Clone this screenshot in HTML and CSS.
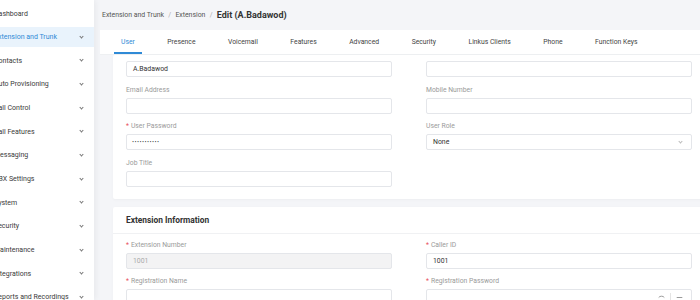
FILE: index.html
```html
<!DOCTYPE html>
<html lang="en">
<head>
  <meta charset="UTF-8" />
  <title>Edit Extension</title>
  <link rel="stylesheet" href="styles.css">
</head>
<body>
  <div class="app">
    <!-- Sidebar -->
    <nav class="sidebar">
      <div class="nav-item"><span>Dashboard</span></div>
      <div class="nav-item active"><span>Extension and Trunk</span><i class="chev"></i></div>
      <div class="nav-item"><span>Contacts</span><i class="chev"></i></div>
      <div class="nav-item"><span>Auto Provisioning</span><i class="chev"></i></div>
      <div class="nav-item"><span>Call Control</span><i class="chev"></i></div>
      <div class="nav-item"><span>Call Features</span><i class="chev"></i></div>
      <div class="nav-item"><span>Messaging</span><i class="chev"></i></div>
      <div class="nav-item"><span>PBX Settings</span><i class="chev"></i></div>
      <div class="nav-item"><span>System</span><i class="chev"></i></div>
      <div class="nav-item"><span>Security</span><i class="chev"></i></div>
      <div class="nav-item"><span>Maintenance</span><i class="chev"></i></div>
      <div class="nav-item"><span>Integrations</span><i class="chev"></i></div>
      <div class="nav-item"><span>Reports and Recordings</span><i class="chev"></i></div>
    </nav>

    <main class="main">
      <div class="breadcrumb">
        <span class="crumb">Extension and Trunk</span>
        <span class="sep">/</span>
        <span class="crumb">Extension</span>
        <span class="sep">/</span>
        <span class="current">Edit (A.Badawod)</span>
      </div>

      <div class="tabs">
        <div class="tab active">User</div>
        <div class="tab">Presence</div>
        <div class="tab">Voicemail</div>
        <div class="tab">Features</div>
        <div class="tab">Advanced</div>
        <div class="tab">Security</div>
        <div class="tab">Linkus Clients</div>
        <div class="tab">Phone</div>
        <div class="tab">Function Keys</div>
      </div>

      <div class="content">
        <!-- User info -->
        <section class="card">
          <div class="form-grid">
            <div class="field">
              <div class="input">A.Badawod</div>
            </div>
            <div class="field">
              <div class="input"></div>
            </div>
            <div class="field">
              <label>Email Address</label>
              <div class="input"></div>
            </div>
            <div class="field">
              <label>Mobile Number</label>
              <div class="input"></div>
            </div>
            <div class="field">
              <label class="req">User Password</label>
              <div class="input dots">···········</div>
            </div>
            <div class="field">
              <label>User Role</label>
              <div class="input select">None<i class="chev light"></i></div>
            </div>
            <div class="field">
              <label>Job Title</label>
              <div class="input"></div>
            </div>
          </div>
        </section>

        <!-- Extension information -->
        <section class="card">
          <h2 class="card-title">Extension Information</h2>
          <div class="form-grid">
            <div class="field">
              <label class="req">Extension Number</label>
              <div class="input disabled">1001</div>
            </div>
            <div class="field">
              <label class="req">Caller ID</label>
              <div class="input">1001</div>
            </div>
            <div class="field">
              <label class="req">Registration Name</label>
              <div class="input"></div>
            </div>
            <div class="field">
              <label class="req">Registration Password</label>
              <div class="input with-icons">
                <span class="icons">
                  <svg width="7" height="7" viewBox="0 0 10 10"><path d="M1 5c1.5-2.5 6.5-2.5 8 0" fill="none" stroke="#888" stroke-width="1.2"/></svg>
                  <span class="divider"></span>
                  <svg width="7" height="7" viewBox="0 0 10 10"><path d="M1 5h8" fill="none" stroke="#888" stroke-width="1.2"/></svg>
                </span>
              </div>
            </div>
          </div>
        </section>
      </div>
    </main>
  </div>
</body>
</html>
```

FILE: styles.css
```css
:root {
  --blue: #2f8ad6;
  --text: #333;
  --muted: #9a9a9a;
  --line: #e4e6ea;
  --page: #f4f5f8;
}

* { box-sizing: border-box; margin: 0; padding: 0; }

body {
  width: 700px;
  height: 300px;
  overflow: hidden;
  background: var(--page);
  font-family: Roboto, "Liberation Sans", sans-serif;
  color: var(--text);
}

.app {
  display: flex;
  margin-left: -6px;
  height: 300px;
  overflow: hidden;
}

/* Sidebar */
.sidebar {
  width: 100px;
  flex-shrink: 0;
  background: #fff;
  padding-top: 3.5px;
  box-shadow: 2px 0 6px rgba(0,0,0,0.05);
  position: relative;
  z-index: 2;
}
.nav-item {
  height: 20px;
  margin-bottom: 3.67px;
  display: flex;
  align-items: center;
  justify-content: space-between;
  padding-right: 11px;
  font-size: 7px;
  color: #3a3a3a;
  white-space: nowrap;
}
.nav-item.active {
  background: #e9f3fc;
  color: var(--blue);
}
.chev {
  width: 3px;
  height: 3px;
  border-right: 1px solid #777;
  border-bottom: 1px solid #777;
  transform: rotate(45deg);
  margin-top: -2px;
}
.chev.light { border-color: #bbb; }

/* Main */
.main {
  flex: 1;
  padding-left: 6px;
  min-width: 0;
}
.breadcrumb {
  height: 30px;
  display: flex;
  align-items: center;
  gap: 3.75px;
  padding-left: 2px;
  font-size: 6.9px;
  color: #555;
  white-space: nowrap;
}
.breadcrumb .sep { color: #aaa; margin: 0 0.5px; }
.breadcrumb .current {
  font-size: 9px;
  font-weight: 700;
  color: #333;
}

.tabs {
  height: 25px;
  background: #fff;
  display: flex;
  align-items: stretch;
  padding-left: 14px;
  border-bottom: 1px solid #eef0f2;
  white-space: nowrap;
}
.tab {
  padding: 0 7px;
  margin-right: 18.5px;
  display: flex;
  align-items: center;
  font-size: 6.8px;
  color: #444;
  border-bottom: 2px solid transparent;
  padding-top: 2px;
}
.tab.active {
  color: var(--blue);
  border-bottom-color: var(--blue);
}

.content {
  padding: 0 0 0 13px;
  display: flex;
  flex-direction: column;
  gap: 8px;
}

.card {
  background: #fff;
  width: 620px;
  padding: 6px 0 12.5px 13px;
  border-radius: 2px;
  box-shadow: 0 1px 3px rgba(0,0,0,0.03);
}
.card-title {
  font-size: 8.4px;
  font-weight: 700;
  color: #333;
  height: 27px;
  display: flex;
  align-items: center;
  border-bottom: 1px solid #f0f1f3;
  margin: -6px 0 4.5px -13px;
  padding-left: 13px;
}

.form-grid {
  display: grid;
  grid-template-columns: 266px 266px;
  column-gap: 34px;
  row-gap: 6.5px;
}
.field label {
  display: block;
  height: 12px;
  line-height: 12px;
  font-size: 6.8px;
  color: var(--muted);
  margin-bottom: 2px;
}
.field label.req::before {
  content: "*";
  color: #e8505b;
  margin-right: 2px;
}
.input {
  height: 16px;
  border: 1px solid var(--line);
  border-radius: 2px;
  padding: 0 6px;
  display: flex;
  align-items: center;
  font-size: 6.9px;
  color: #333;
  background: #fff;
}
.input.disabled {
  background: #f3f3f4;
  color: #aaa;
}
.input.dots {
  font-size: 7px;
  font-weight: 700;
  letter-spacing: 0.4px;
  padding-left: 5px;
}
.input.select {
  justify-content: space-between;
  padding-right: 9px;
}
.input.with-icons { justify-content: flex-end; padding-right: 8px; }
.icons {
  display: flex;
  align-items: center;
  gap: 5px;
}
.divider {
  width: 1px;
  height: 8px;
  background: #e4e4e4;
}
```
